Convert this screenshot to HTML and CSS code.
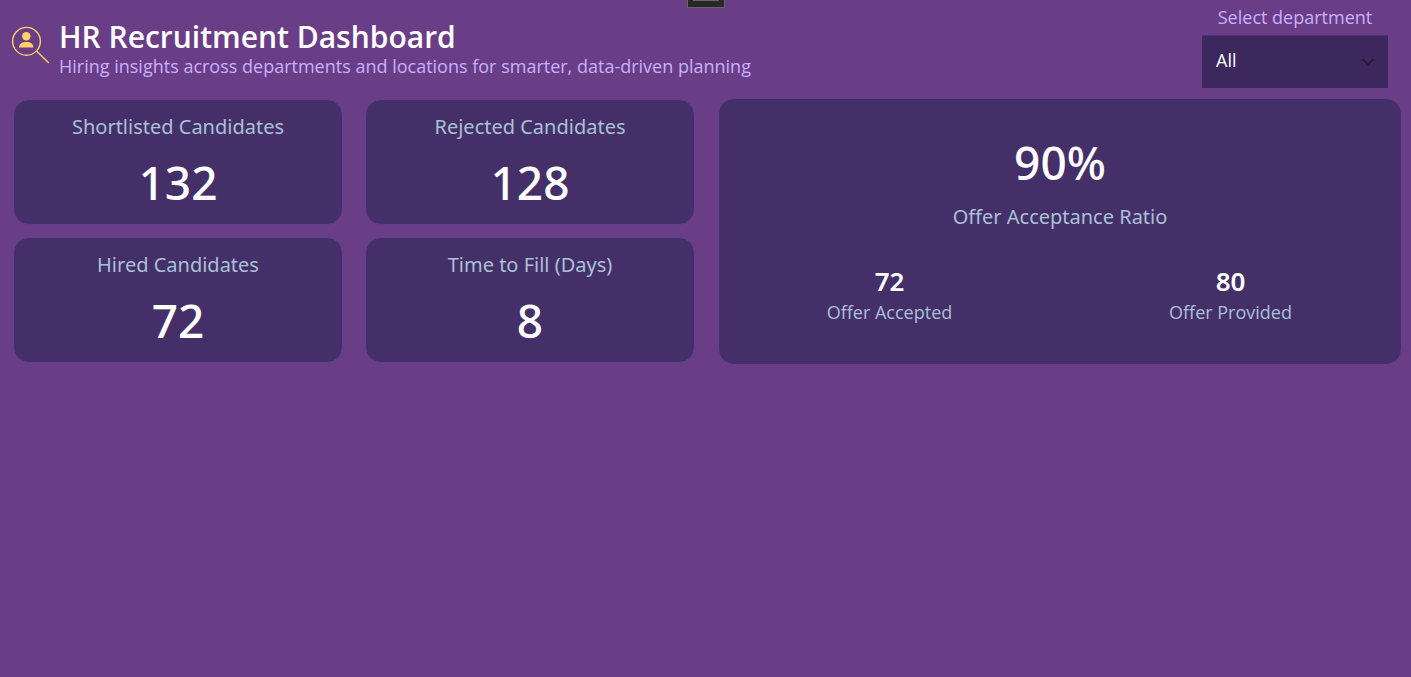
FILE: index.html
```html
<!DOCTYPE html>
<html lang="en">
  <head>
    <meta charset="utf-8">
    <meta name="viewport" content="width=device-width,initial-scale=1.0">
    <title>HR Recruitment Dashboard</title>
    <link rel="stylesheet" href="styles.css">
  </head>
  <body>
    <div class="handle"><span class="handle-bar"></span></div>

    <header class="header">
      <svg class="logo" viewBox="0 0 40 40" aria-hidden="true">
        <circle cx="16.5" cy="16.3" r="13.9" fill="none" stroke="#ffd166" stroke-width="1.4"/>
        <path d="M26.5 26 L38.8 38" stroke="#ffd166" stroke-width="1.4"/>
        <circle cx="16.3" cy="11.2" r="4.2" fill="#ffd166"/>
        <path d="M9 22.6 C9 19 11.7 17 16.3 17 S23.4 19 23.4 22.6 Z" fill="#ffd166"/>
      </svg>
      <div class="heading">
        <h1 class="title">HR Recruitment Dashboard</h1>
        <p class="subtitle">Hiring insights across departments and locations for smarter, data-driven planning</p>
      </div>
      <div class="filter">
        <label class="filter-label" for="department">Select department</label>
        <div class="select-box">
          <select id="department" class="select">
            <option>All</option>
          </select>
          <svg class="chevron" viewBox="0 0 12 8" aria-hidden="true">
            <path d="M0.5 1 L6 6.5 L11.5 1" fill="none" stroke="#1f1330" stroke-width="1.2"/>
          </svg>
        </div>
      </div>
    </header>

    <main class="dashboard">
      <section class="cards">
        <div class="card">
          <div class="label">Shortlisted Candidates</div>
          <div class="value">132</div>
        </div>
        <div class="card">
          <div class="label">Rejected Candidates</div>
          <div class="value">128</div>
        </div>
        <div class="card">
          <div class="label">Hired Candidates</div>
          <div class="value">72</div>
        </div>
        <div class="card">
          <div class="label">Time to Fill (Days)</div>
          <div class="value">8</div>
        </div>
      </section>

      <section class="card ratio">
        <div class="value">90%</div>
        <div class="label">Offer Acceptance Ratio</div>
        <div class="offers">
          <div class="offer">
            <div class="offer-value">72</div>
            <div class="offer-label">Offer Accepted</div>
          </div>
          <div class="offer">
            <div class="offer-value">80</div>
            <div class="offer-label">Offer Provided</div>
          </div>
        </div>
      </section>
    </main>
  </body>
</html>
```
FILE: styles.css
```css
* {
  box-sizing: border-box;
}

body {
  margin: 0;
  background: #6a3e86;
  color: #fff;
  font-family: "Noto Sans", "Open Sans", sans-serif;
}

/* window handle over the top edge */
.handle {
  position: absolute;
  top: 0;
  left: 50%;
  width: 38px;
  height: 8px;
  margin-left: -19px;
  background: #282828;
  border: 1px solid #666;
  border-top: none;
}

.handle-bar {
  display: block;
  width: 26px;
  height: 1px;
  margin: 0 auto;
  background: #666;
}

.header {
  display: flex;
  align-items: flex-start;
  padding: 4px 23px 0 10px;
}

.logo {
  width: 40px;
  height: 40px;
  margin: 21px 9px 0 0;
}

.heading {
  flex: 1;
  padding-top: 13px;
}

.title {
  margin: 0;
  font-family: "Open Sans", sans-serif;
  font-size: 30px;
  font-weight: 600;
  line-height: 40px;
}

.subtitle {
  margin: 0;
  font-family: "Open Sans", sans-serif;
  font-size: 18px;
  line-height: 18px;
  color: #c8b0ff;
}

.filter {
  width: 186px;
  font-family: "Open Sans", sans-serif;
  font-size: 18px;
  text-align: center;
}

.filter-label {
  display: block;
  line-height: 26px;
  margin-bottom: 5px;
  color: #c8b0ff;
}

.select-box {
  display: grid;
  align-items: center;
}

.select {
  grid-area: 1 / 1;
  appearance: none;
  width: 100%;
  height: 53px;
  padding: 0 14px 4px;
  border: none;
  border-top: 1px solid #4a2f7d;
  border-radius: 0;
  background: #3c285c;
  color: #fff;
  font: inherit;
}

.chevron {
  grid-area: 1 / 1;
  justify-self: end;
  width: 12px;
  height: 8px;
  margin-right: 14px;
  pointer-events: none;
}

.dashboard {
  display: grid;
  grid-template-columns: 1fr 1fr;
  gap: 21px;
  padding: 10px 9px 0 13px;
}

.cards {
  display: grid;
  grid-template-columns: 1fr 1fr;
  gap: 12px 22px;
  padding: 1px 2px 2px 0;
}

.card {
  padding: 13px 0 15px;
  border: 1px solid #5f3f94;
  border-radius: 16px;
  background: #452f69;
  text-align: center;
}

.label {
  font-size: 20px;
  line-height: 28px;
  color: #a9c1d6;
}

.value {
  font-size: 46px;
  font-weight: 500;
  line-height: 54px;
}

.cards .value {
  margin-top: 14px;
}

.ratio {
  padding-top: 36px;
}

.ratio .label {
  margin-top: 14px;
}

.offers {
  display: grid;
  grid-template-columns: 1fr 1fr;
  margin-top: 32px;
}

.offer-value {
  font-size: 26px;
  font-weight: 600;
  line-height: 36px;
}

.offer-label {
  font-family: "Open Sans", sans-serif;
  font-size: 18px;
  line-height: 26px;
  color: #a9c1d6;
}
```
